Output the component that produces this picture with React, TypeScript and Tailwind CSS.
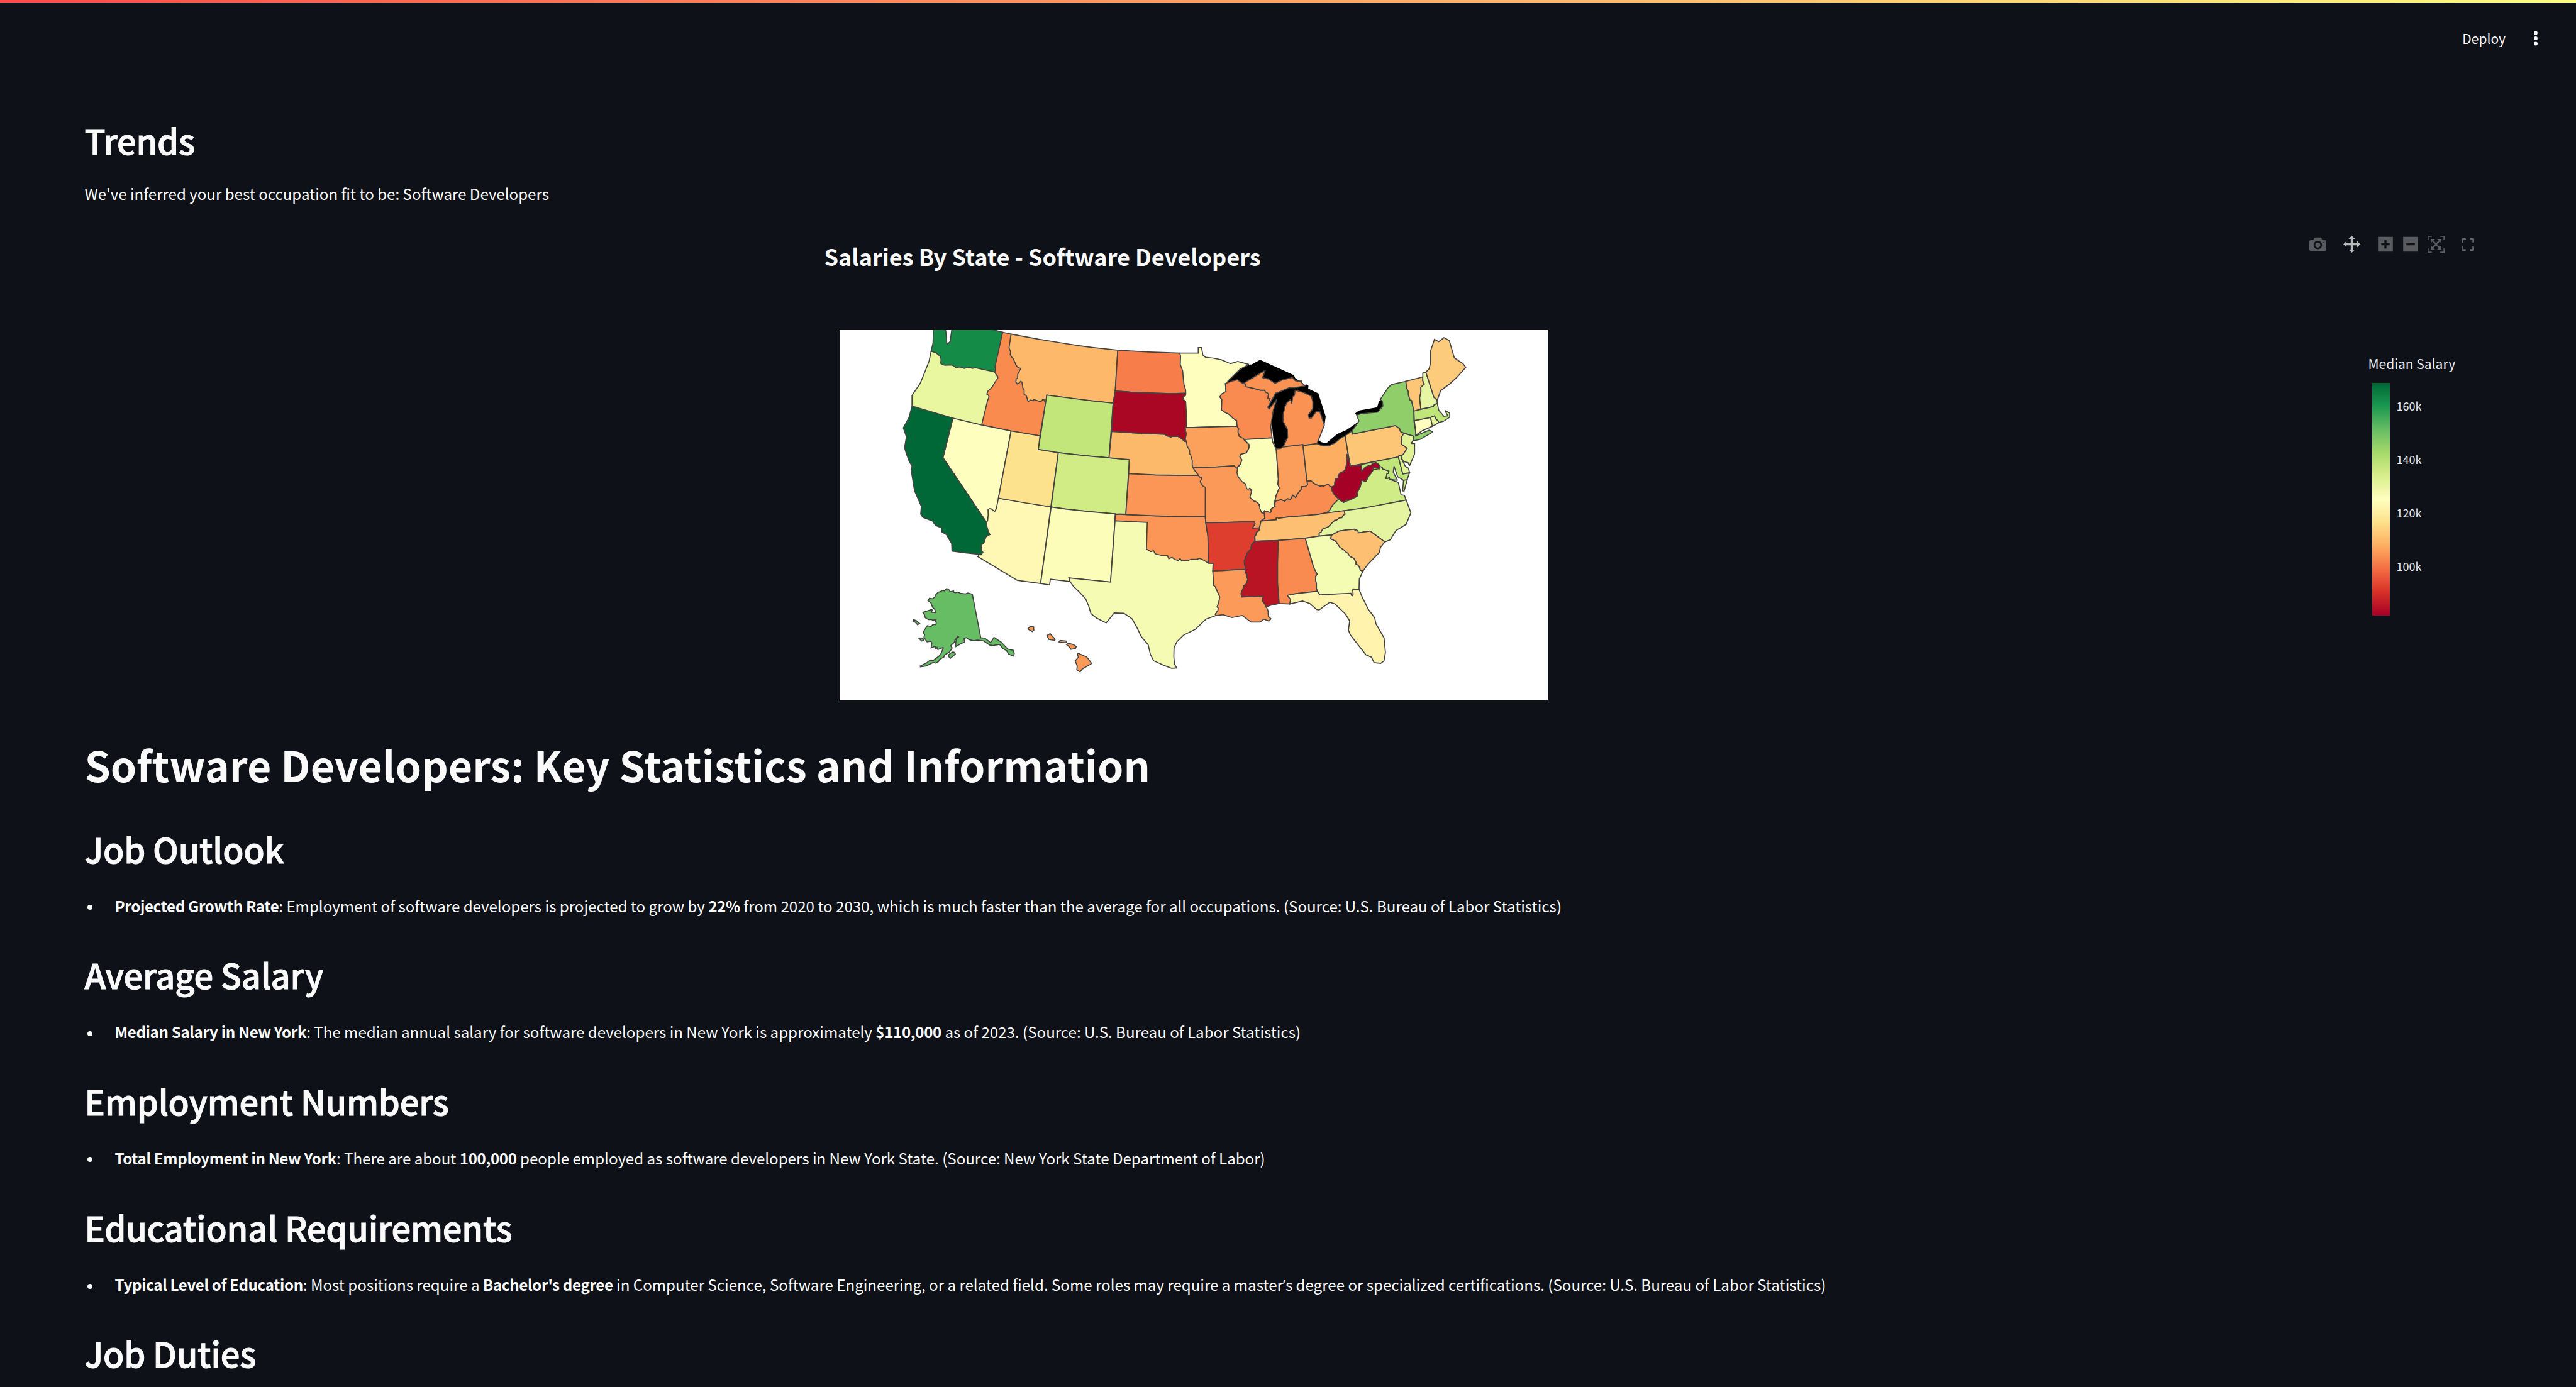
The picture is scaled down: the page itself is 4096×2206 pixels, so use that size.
import React from "react";

/* ---------- Map geometry ---------- */

// Outlines are stored per map sheet; each sheet has its own origin and scale.
type Sheet = { x: number; y: number; sx: number; sy: number };
const SHEETS: Record<string, Sheet> = {
  A: { x: 2190, y: 860, sx: 2.45, sy: 2.45 },
  B: { x: 2800, y: 860, sx: 3, sy: 3 },
  C: { x: 3150, y: 860, sx: 3, sy: 3 },
  D: { x: 3500, y: 860, sx: 2.7034, sy: 2.7034 },
  E: { x: 2360, y: 1400, sx: 2.8, sy: 3 },
  F: { x: 2780, y: 1300, sx: 2.8, sy: 3 },
  G: { x: 3260, y: 1300, sx: 2.8, sy: 3 },
};

function outline(src: string): string {
  let sheet = SHEETS.A;
  const pts: string[] = [];
  for (const tok of src.trim().split(/\s+/)) {
    if (SHEETS[tok]) {
      sheet = SHEETS[tok];
      continue;
    }
    const [x, y] = tok.split(",").map(Number);
    pts.push(
      `${(sheet.x + x / sheet.sx).toFixed(1)},${(sheet.y + y / sheet.sy).toFixed(1)}`
    );
  }
  return pts.join(" ");
}

const LAKES = [
  "C 215,432 290,345 385,292 405,290 473,253 740,375 750,398 768,410 770,416 790,418 798,411 802,428 820,450 845,448 854,458 852,480 932,518 990,700 981,765 800,700 800,600 750,600 720,700 690,865 654,942 635,954 600,957 580,900 560,700 520,640 540,500 300,500",
  "C 938,885 950,900 975,909 1000,906 1080,838 1155,806 1240,746 1220,790 1197,830 1143,880 1062,925 965,940 915,916",
  "C 1220,677 1250,653 1395,627 1410,575 1425,568 1460,618 1397,680 1270,690 1238,694",
];

const STATES: [string, string, string][] = [
  ["WA", "#148c48", "A 637,5 634,100 622,152 640,300 1000,330 1060,250 1082,30 1020,14 980,5 756,5 744,90 724,108 716,20 708,15 708,5"],
  ["OR", "#e9f7a1", "A 622,152 652,161 681,185 686,205 683,230 695,238 712,242 752,240 765,245 782,257 808,253 835,262 870,254 886,262 908,258 1032,286 1100,400 1000,640 950,660 500,520 499,505 499,436 551,360 580,290 609,215"],
  ["MT", "#fdb869", "A 1136,42 1310,74 1480,102 B 100,143 200,156 402,178 382,497 365,595 200,577 0,552 A 1366,434 1359,490 1200,500 1150,300 1120,130"],
  ["ID", "#f98b4f", "A 1082,30 1136,42 1123,130 1133,155 1131,174 1139,188 1150,200 1169,243 1181,257 1199,263 1179,300 1178,325 1169,330 1167,350 1176,362 1188,357 1199,345 1206,350 1212,388 1220,400 1221,430 1234,438 1246,476 1262,466 1280,471 1283,463 1320,474 1332,473 1342,459 1349,465 1354,478 1359,480 1322,696 1136,665 947,626 985,470 995,445 990,435 980,428 986,410 1015,382 1036,346 1051,325 1050,314 1036,295 1032,286 1036,268 1033,253"],
  ["AZ", "#fff7b4", "A 1055,1097 1225,1125 1392,1153 E 1040,396 870,371 578,184 A 931,1462 935,1400 970,1230 1000,1150"],
  ["NV", "#feffbe", "A 762,582 947,626 1136,665 1055,1097 1041,1165 1031,1183 1010,1167 996,1164 988,1172 989,1205 986,1240 979,1254 698,837"],
  ["CA", "#006837", "A 499,505 480,578 443,645 463,702 451,772 462,810 480,858 500,893 493,912 515,1048 559,1150 555,1200 569,1220 631,1244 650,1272 688,1288 689,1313 720,1331 754,1390 756,1438 836,1448 930,1458 943,1461 955,1445 945,1430 944,1400 962,1384 975,1345 1000,1331 990,1312 981,1280 979,1254 698,837 762,582"],
  ["UT", "#fde28e", "A 1136,665 1322,696 1312,783 1440,804 1392,1153 1225,1127 1055,1097"],
  ["WY", "#c2e67a", "A 1366,434 B 0,552 200,577 365,595 333,1025 200,1014 0,993 A 1440,804 1312,783"],
  ["CO", "#d2ec85", "A 1440,804 B 0,993 200,1014 333,1025 493,1040 465,1470 383,1467 200,1451 0,1430 A 1394,1154"],
  ["NM", "#fbfdb9", "A 1394,1154 B 0,1430 200,1451 383,1467 F 378,685 72,652 80,682 E 1256,380 1111,362 1106,407 1040,396"],
  ["OK", "#fb9656", "F 413,150 490,152 700,162 870,168 1074,167 1078,218 1094,325 1097,535 900,560 600,500 600,230 411,202"],
  ["TX", "#f5fbb3", "F 411,202 648,214 642,424 673,444 695,438 706,462 755,475 796,476 806,500 830,490 850,506 876,515 889,499 902,518 928,512 942,517 970,505 1015,504 1034,498 1065,513 1097,535 1132,536 1130,597 1136,711 1149,722 1181,801 1175,840 1162,880 1169,888 1168,908 1148,937 1152,948 1080,976 1002,1056 915,1102 866,1154 845,1200 843,1270 848,1330 864,1361 826,1363 770,1340 695,1304 671,1254 654,1176 604,1114 574,1046 537,974 476,930 405,927 346,1006 275,968 234,933 217,872 194,815 150,764 106,719 82,684 72,652 378,685"],
  ["KS", "#fb9656", "B 488,1149 700,1160 860,1163 1060,1164 1150,1250 1150,1488 F 1074,167 870,168 700,162 490,152"],
  ["MN", "#feffbf", "B 890,201 1036,201 1036,157 1062,157 1072,215 1094,234 1150,240 1220,254 1290,284 1347,267 1435,290 1365,328 1268,422 1268,434 1250,440 1254,503 1218,525 1207,546 1222,567 1219,648 1240,664 1280,684 1310,715 1338,732 1343,777 1000,787 935,788 850,600 850,300"],
  ["IA", "#fca15b", "B 935,788 1000,787 1343,777 1347,787 1356,800 1350,815 1358,856 1390,866 1398,885 1437,921 1436,948 1415,987 1370,998 1364,1018 1380,1042 1368,1076 1350,1090 1343,1112 1318,1089 1170,1098 990,1102 940,1000 900,850"],
  ["MO", "#fb9958", "B 990,1102 1170,1098 1318,1089 1343,1110 1400,1200 1480,1330 F 1480,100 1490,138 1508,142 1512,182 1485,203 1472,257 1420,260 1440,225 1436,211 1340,211 1200,215 1078,217 1074,167 B 1091,1257 1069,1245 1051,1213 1062,1192 1062,1180 1049,1178 1020,1150"],
  ["NE", "#fdb96a", "B 354,818 600,833 772,840 790,852 822,862 830,857 876,857 915,880 930,897 941,895 949,935 967,963 968,996 976,1002 989,1050 988,1082 996,1107 1012,1130 1030,1153 1038,1164 860,1163 700,1160 488,1149 493,1040 333,1025"],
  ["ND", "#f77e4a", "B 402,178 650,192 890,201 897,225 894,290 913,340 918,400 924,450 937,492 937,517 830,520 700,517 500,508 382,499"],
  ["SD", "#aa0725", "B 382,499 500,508 700,517 830,520 937,517 937,533 917,546 919,565 937,583 942,670 943,786 935,790 935,815 941,828 940,850 933,880 941,895 930,897 918,890 915,880 876,857 830,857 822,862 790,852 772,840 600,833 354,818 365,600"],
  ["AR", "#de3e2e", "F 1078,217 1200,215 1340,211 1436,211 1440,225 1420,260 1472,257 1469,278 1450,293 1448,310 1438,325 1441,363 1415,388 1410,425 1385,452 1362,515 1362,540 1370,570 1368,586 1295,587 1200,594 1130,597 1132,536 1097,535 1094,325"],
  ["LA", "#fb9a59", "F 1130,597 1200,594 1295,587 1368,586 1369,608 1382,630 1381,650 1388,662 1375,700 1360,712 1338,775 1341,801 1500,796 1494,832 1510,852 1524,882 1536,910 1538,955 1558,974 1542,991 1505,976 1478,999 1412,999 1345,947 1270,964 1205,941 1152,948 1148,937 1168,908 1169,888 1162,880 1175,840 1181,801 1149,722 1136,711"],
  ["WI", "#f98a50", "C 200,440 250,422 292,410 338,441 355,442 363,466 425,479 475,493 508,493 518,509 530,515 540,523 534,557 551,560 548,572 558,584 533,628 545,640 605,563 577,650 557,780 567,868 348,882 342,874 310,856 299,825 300,805 305,800 296,787 292,777 288,732 260,715 230,684 190,664 169,648 172,567 157,546 168,525 204,503"],
  ["MI", "#fa9254", "C 338,441 515,335 492,394 540,405 591,439 650,411 727,393 750,418 790,425 828,460 750,472 703,473 622,508 595,517 558,584 548,572 551,560 534,557 540,523 530,515 518,509 508,493 475,493 425,479 363,466 355,442"],
  ["MI2", "#fa9254", "C 750,493 820,512 877,541 889,585 888,640 854,687 859,712 877,712 915,661 945,664 979,768 955,830 921,914 815,928 654,940 690,865 688,800 655,740 655,685 668,625 682,595 712,565 722,600 730,545 743,533"],
  ["IL", "#fbfeb9", "C 348,882 567,868 572,900 595,948 600,955 617,1195 613,1232 625,1262 600,1322 590,1365 584,1397 594,1405 558,1430 562,1445 555,1457 508,1444 500,1460 485,1457 471,1425 467,1392 437,1368 424,1366 393,1337 408,1280 392,1264 380,1273 367,1268 360,1232 330,1213 300,1175 291,1142 297,1098 310,1088 318,1076 330,1042 314,1018 320,998 365,987 386,948 386,921"],
  ["KY", "#f98c51", "G 165,142 168,182 140,203 252,194 252,180 260,175 268,182 350,170 450,162 560,151 600,143 C 1000,1455 1020,1440 1035,1415 1047,1395 1095,1352 1060,1318 1040,1285 1037,1255 1025,1250 1009,1233 978,1246 945,1247 910,1235 873,1206 842,1208 847,1238 830,1250 800,1252 798,1272 768,1308 753,1338 730,1320 711,1355 690,1347 667,1367 640,1355 598,1365 590,1380 584,1397 594,1405 558,1430 562,1445 555,1457 508,1444"],
  ["IN", "#fc9e5b", "C 600,955 635,952 654,940 810,921 842,1208 847,1238 830,1250 800,1252 798,1272 768,1308 753,1338 730,1320 711,1355 690,1347 667,1367 640,1355 598,1365 590,1365 600,1322 625,1262 613,1232 617,1195"],
  ["OH", "#fdae61", "C 812,930 921,914 965,931 1012,931 1062,909 1105,873 1143,852 1167,998 1155,1000 1160,1030 1150,1100 1138,1128 1105,1145 1088,1165 1088,1190 1070,1188 1062,1215 1060,1245 1037,1255 1025,1250 1009,1233 978,1246 945,1247 910,1235 873,1206 842,1208"],
  ["VA", "#d0ec86", "D 515,1221 505,1190 481,1187 461,1098 400,1077 398,1064 385,1070 374,1070 380,1040 390,1035 395,1018 350,1003 348,992 330,985 324,1002 285,990 250,1052 232,1093 203,1084 170,1170 165,1200 73,1240 40,1215 C 1047,1395 1035,1415 1020,1440 1000,1455 G 600,143 753,122 905,100 1208,38"],
  ["VA2", "#d0ec86", "D 498,1084 526,1075 502,1160 492,1159"],
  ["TN", "#fdc072", "G 140,203 252,194 252,180 260,175 268,182 350,170 450,162 560,151 600,143 753,122 758,150 745,158 735,177 715,180 692,200 684,195 672,210 660,222 635,250 594,266 582,291 568,299 568,322 466,338 265,357 97,363 95,325 105,310 107,293 126,278 130,257"],
  ["NC", "#e5f4a0", "G 753,122 905,100 1208,38 1242,138 1207,230 1132,278 1090,352 1050,368 943,283 855,297 853,283 838,270 830,268 780,272 715,282 662,313 568,322 568,299 582,291 594,266 635,250 660,222 672,210 684,195 692,200 715,180 735,177 745,158 758,150"],
  ["MS", "#b81424", "G 97,363 265,357 267,372 262,540 262,690 274,853 210,867 178,881 166,852 150,832 156,796 -3,801 -6,775 16,712 31,700 44,662 37,650 38,630 25,608 24,586 26,570 18,540 18,515 41,452 66,425 71,388"],
  ["AL", "#f98b50", "G 265,357 466,339 528,570 553,622 542,640 542,672 548,695 548,735 556,757 400,775 337,788 337,796 358,820 352,857 274,853 262,690 262,540 267,372"],
  ["FL", "#fff3ae", "G 337,788 400,775 556,757 574,785 700,777 801,773 809,793 817,780 814,745 819,738 861,742 883,800 930,900 976,965 985,1012 1045,1124 1055,1238 1044,1306 1020,1325 972,1319 952,1276 912,1258 798,1102 783,1062 792,990 760,934 683,856 646,843 567,904 550,901 500,854 446,833 352,857 358,820 337,796"],
  ["GA", "#f4fbb3", "G 466,339 568,322 662,313 650,342 690,362 720,410 752,432 762,445 780,458 795,483 823,497 840,530 838,541 855,552 866,570 870,590 890,597 863,660 861,742 819,738 814,745 817,780 809,793 801,773 700,777 574,785 556,757 548,735 548,695 542,672 542,640 553,622 528,570"],
  ["SC", "#fdc072", "G 662,313 715,282 780,272 830,268 831,280 838,270 853,283 855,297 943,283 1050,368 1018,412 1010,452 928,542 890,597 870,590 866,570 855,552 838,541 840,530 823,497 795,483 780,458 762,445 752,432 720,410 690,362 650,342"],
  ["PA", "#fdc676", "D 84,768 128,735 137,755 440,695 470,716 477,738 500,750 481,785 487,800 485,828 525,856 497,898 482,912 468,905 462,918 300,950 120,983"],
  ["NY", "#8fce69", "D 166,622 190,612 315,600 352,556 348,522 333,510 388,428 412,404 515,381 521,430 533,455 533,478 545,515 555,516 572,592 572,660 586,748 584,768 680,728 708,740 615,794 568,803 568,770 500,748 477,738 470,716 440,695 137,755 133,733 182,663"],
  ["NJ", "#e0f295", "D 500,750 568,770 566,800 553,822 577,822 577,897 541,980 530,958 500,952 480,920 482,912 497,898 525,856 485,828 487,800 481,785"],
  ["MD", "#c0e578", "D 198,972 300,950 462,918 493,1038 541,1030 524,1078 498,1084 457,1058 431,984 425,1026 456,1084 400,1076 398,1064 385,1070 374,1070 380,1040 390,1035 395,1018 350,1003 348,992 330,985 324,1002 202,1020"],
  ["DE", "#dff294", "D 462,918 468,905 482,908 480,918 487,937 512,985 534,998 541,1030 493,1038"],
  ["WV", "#a50026", "C 1158,998 1165,998 1185,1090 1270,1082 1273,1132 1300,1100 1325,1088 1350,1082 1360,1070 1385,1063 1405,1075 1416,1090 1412,1112 1365,1100 1362,1125 1345,1150 1330,1168 1318,1190 1305,1212 1275,1202 1268,1230 1262,1255 1240,1298 1238,1328 1220,1338 1200,1345 1190,1355 1165,1362 1150,1358 1132,1376 1105,1362 1095,1350 1060,1318 1040,1285 1037,1255 1060,1245 1062,1215 1070,1188 1088,1190 1088,1165 1105,1145 1138,1128 1150,1100 1160,1030"],
  ["CT", "#feffbe", "D 575,660 690,638 704,700 633,731 586,764 586,745"],
  ["MA", "#c0e579", "D 572,592 710,560 716,545 738,538 748,586 785,629 813,626 791,588 826,606 826,636 782,665 747,674 745,663 728,650 718,626 690,638 575,660"],
  ["RI", "#e5f5a0", "D 690,638 718,626 728,650 745,663 747,676 704,700"],
  ["VT", "#fdc677", "D 515,381 635,350 635,378 646,400 621,424 622,455 613,500 621,578 572,592 555,516 545,515 533,478 533,455 521,430"],
  ["NH", "#e6f6a2", "D 635,350 635,323 657,316 714,494 735,514 738,538 716,545 710,560 621,578 613,500 622,455 621,424 646,400 635,378"],
  ["ME", "#fdcb7c", "D 657,316 680,292 691,247 691,163 718,83 748,100 785,71 823,91 859,215 919,254 940,282 880,350 828,398 762,447 738,514 714,494"],
  ["AK", "#66bd63", "E 349,435 368,447 374,460 400,455 402,465 415,468 430,463 450,472 485,478 505,470 538,480 600,823 630,826 672,862 697,820 748,856 798,912 838,922 846,945 842,968 805,952 790,925 760,905 738,875 690,884 665,880 622,848 575,840 550,846 515,838 493,822 476,830 482,856 450,872 417,892 415,870 420,830 437,818 432,810 410,840 405,860 378,886 390,903 370,935 334,958 328,975 298,992 290,1010 268,1022 250,1018 195,1046 156,1052 155,1045 200,1022 222,1004 250,1002 290,970 308,948 325,900 300,908 285,917 278,900 268,912 265,890 235,903 240,865 232,850 205,855 182,820 187,800 177,783 185,762 208,728 235,735 248,718 268,720 273,705 265,685 275,675 245,687 240,680 215,680 192,665 185,640 174,623 240,600 243,605 237,622 270,625 262,600 245,582 235,550 212,530 222,513 245,516 262,502 268,485 285,466 322,450 332,455"],
  ["AK2", "#66bd63", "E 102,692 106,680 125,688 150,710 135,720 118,700"],
  ["AK3", "#66bd63", "E 143,826 165,824 178,832 178,845 166,849"],
  ["AK4", "#66bd63", "E 363,957 390,936 403,937 413,950 376,985 364,970"],
  ["HI", "#fb9a59", "E 945,753 962,735 988,737 990,762 978,774"],
  ["HI2", "#fb9a59", "E 1086,805 1110,791 1147,835 1142,842 1101,836"],
  ["HI3", "#fb9a59", "E 1174,858 1183,844 1232,849 1228,862"],
  ["HI4", "#fb9a59", "E 1231,877 1243,866 1280,876 1302,892 1296,907 1263,914 1248,892"],
  ["HI5", "#fb9a59", "E 1309,955 1315,944 1380,975 1415,1026 1345,1070 1330,1092 1306,1075 1309,1045 1294,1005 1318,975"],
];

function SalaryMap() {
  return (
    <svg
      className="block h-[589px] w-[1126px] shrink-0 bg-white"
      viewBox="2203.5 866.5 1859.5 972.3"
      preserveAspectRatio="none"
    >
      {LAKES.map((d) => (
        <polygon key={d} points={outline(d)} fill="#000" />
      ))}
      {STATES.map(([id, fill, d]) => (
        <polygon
          key={id}
          points={outline(d)}
          fill={fill}
          stroke="#444"
          strokeWidth={2.8}
          strokeLinejoin="miter"
          strokeMiterlimit={2}
        />
      ))}
    </svg>
  );
}

/* ---------- Mode bar ---------- */

const FLIP = "matrix(1 0 0 -1 0 850)";

function CameraIcon() {
  return (
    <svg className="h-[27px] w-[27px]" viewBox="0 0 1000 1000" fill="#5a5b5f">
      <path
        transform={FLIP}
        d="m500 450c-83 0-150-67-150-150 0-83 67-150 150-150 83 0 150 67 150 150 0 83-67 150-150 150z m400 150h-120c-16 0-34 13-39 29l-31 93c-6 15-23 28-40 28h-340c-16 0-34-13-39-28l-31-94c-6-15-23-28-40-28h-120c-55 0-100-45-100-100v-450c0-55 45-100 100-100h800c55 0 100 45 100 100v450c0 55-45 100-100 100z m-400-550c-138 0-250 112-250 250 0 138 112 250 250 250 138 0 250-112 250-250 0-138-112-250-250-250z m365 380c-19 0-35 16-35 35 0 19 16 35 35 35 19 0 35-16 35-35 0-19-16-35-35-35z"
      />
    </svg>
  );
}

function PanIcon() {
  return (
    <svg className="ml-[27px] h-[27px] w-[27px]" viewBox="0 0 1000 1000" fill="#b8b9bb">
      <path
        transform={FLIP}
        d="m1000 350l-187 188 0-125-250 0 0 250 125 0-188 187-187-187 125 0 0-250-250 0 0 125-188-188 186-187 0 125 252 0 0-250-125 0 187-188 188 188-125 0 0 250 250 0 0-126 187 188z"
      />
    </svg>
  );
}

function ZoomInIcon() {
  return (
    <svg className="ml-[28px] h-[27px] w-[24px]" viewBox="0 0 875 1000" fill="#5a5b5f">
      <path
        transform={FLIP}
        d="m1 787l0-875 875 0 0 875-875 0z m687-500l-187 0 0-187-125 0 0 187-188 0 0 125 188 0 0 187 125 0 0-187 187 0 0-125z"
      />
    </svg>
  );
}

function ZoomOutIcon() {
  return (
    <svg className="ml-4 h-[27px] w-[24px]" viewBox="0 0 875 1000" fill="#5a5b5f">
      <path
        transform={FLIP}
        d="m0 788l0-876 875 0 0 876-875 0z m688-500l-500 0 0 125 500 0 0-125z"
      />
    </svg>
  );
}

function AutoscaleIcon() {
  return (
    <svg className="ml-[15px] h-[27px] w-[27px]" viewBox="0 0 1000 1000" fill="#5a5b5f">
      <path
        transform={FLIP}
        d="m250 850l-187 0-63 0 0-62 0-188 63 0 0 188 187 0 0 62z m688 0l-188 0 0-62 188 0 0-188 62 0 0 188 0 62-62 0z m-875-938l0 188-63 0 0-188 0-62 63 0 187 0 0 62-187 0z m875 188l0-188-188 0 0-62 188 0 62 0 0 62 0 188-62 0z m-125 188l-1 0-93-94-156 156 156 156 92-93 2 0 0 250-250 0 0-2 93-92-156-156-156 156 94 92 0 2-250 0 0-250 0 0 93 93 157-156-157-156-93 94 0 0 0-250 250 0 0 0-94 93 156 157 156-157-93-93 0 0 250 0 0 250z"
      />
    </svg>
  );
}

function FullscreenIcon() {
  return (
    <svg
      className="mt-1 ml-[27px] h-[20px] w-[20px]"
      viewBox="0 0 14 14"
      fill="#626368"
    >
      <path d="M1 9c-.55 0-1 .45-1 1v3c0 .55.45 1 1 1h3c.55 0 1-.45 1-1s-.45-1-1-1H2v-2c0-.55-.45-1-1-1zM1 5c.55 0 1-.45 1-1V2h2c.55 0 1-.45 1-1s-.45-1-1-1H1C.45 0 0 .45 0 1v3c0 .55.45 1 1 1zm11 7h-2c-.55 0-1 .45-1 1s.45 1 1 1h3c.55 0 1-.45 1-1v-3c0-.55-.45-1-1-1s-1 .45-1 1v2zM9 1c0 .55.45 1 1 1h2v2c0 .55.45 1 1 1s1-.45 1-1V1c0-.55-.45-1-1-1h-3c-.55 0-1 .45-1 1z" />
    </svg>
  );
}

/* ---------- Legend ---------- */

const TICKS = ["160k", "140k", "120k", "100k"];

function Legend() {
  return (
    <div className="mt-[38px] text-[#e6eaf1]">
      <div className="h-[30px] text-[21px] leading-[30px] whitespace-nowrap">Median Salary</div>
      <div className="mt-4 ml-[6px] flex">
        <div className="h-[370px] w-[28px] bg-[linear-gradient(to_top,#a50026,#d73027,#f46d43,#fdae61,#fee08b,#ffffbf,#d9ef8b,#a6d96a,#66bd63,#1a9850,#006837)]" />
        <div className="mt-[23px] ml-[11px] flex flex-col text-[18px] leading-[26px]">
          {TICKS.map((t) => (
            <span key={t} className="h-[85px]">
              {t}
            </span>
          ))}
        </div>
      </div>
    </div>
  );
}

/* ---------- Report ---------- */

function Heading({ children }: { children: React.ReactNode }) {
  return (
    <h2 className="h-[73px] text-[54.2px] leading-[73px] font-medium tracking-[-0.2px] [-webkit-text-stroke:1px_#fafafa]">
      {children}
    </h2>
  );
}

function Section({ title, children }: { title: string; children?: React.ReactNode }) {
  return (
    <section className="h-[200.7px]">
      <Heading>{title}</Heading>
      {children && (
        <ul className="mt-[33px]">
          <li className="flex items-center text-[24.1px] leading-[43px] whitespace-nowrap">
            <span className="mt-[6px] ml-[4px] size-2 rounded-full bg-[#fafafa]" />
            <span className="ml-[36px]">{children}</span>
          </li>
        </ul>
      )}
    </section>
  );
}

function B({ children }: { children: React.ReactNode }) {
  return <strong className="font-semibold tracking-[-0.33px]">{children}</strong>;
}

export default function App() {
  return (
    <div className="h-[2206px] w-[4096px] overflow-hidden bg-[#0e1117] font-['Noto_Sans_CJK_SC','Noto_Sans',sans-serif] text-[#fafafa]">
      <div className="h-[3.5px] bg-[linear-gradient(90deg,#ff4b4b,#fffd80)]" />
      <header className="flex h-[114px] items-center justify-end pr-[61px]">
        <span className="text-[21px] leading-[30px]">Deploy</span>
        <svg className="ml-[45px] h-[24px] w-[6px]" viewBox="0 0 6 24" fill="#fafafa">
          <circle cx="3" cy="3.5" r="2.9" />
          <circle cx="3" cy="12" r="2.9" />
          <circle cx="3" cy="20.5" r="2.9" />
        </svg>
      </header>

      <main className="px-[134.5px] pt-[68.5px]">
        <Heading>Trends</Heading>
        <p className="mt-[27px] h-[43px] text-[24.1px] leading-[43px]">
          We've inferred your best occupation fit to be: Software Developers
        </p>

        <div className="mt-[46px] flex h-[150px] items-start">
          <h3 className="mt-[12px] ml-[1176px] w-[2361px] text-[36.1px] leading-[40px] font-bold">
            Salaries By State - Software Developers
          </h3>
          <div className="flex items-start">
            <CameraIcon />
            <PanIcon />
            <ZoomInIcon />
            <ZoomOutIcon />
            <AutoscaleIcon />
            <FullscreenIcon />
          </div>
        </div>
        <div className="flex h-[645.5px] items-start">
          <div className="ml-[1200px] w-[2431px]">
            <SalaryMap />
          </div>
          <Legend />
        </div>

        <h1 className="h-[89px] text-[66.2px] leading-[89px] font-bold">
          Software Developers: Key Statistics and Information
        </h1>
        <div className="mt-[53px]">
          <Section title="Job Outlook">
            <B>Projected Growth Rate</B>: Employment of software developers is projected to grow by{" "}
            <B>22%</B> from 2020 to 2030, which is much faster than the average for all occupations.
            (Source: U.S. Bureau of Labor Statistics)
          </Section>
          <Section title="Average Salary">
            <B>Median Salary in New York</B>: The median annual salary for software developers in New
            York is approximately <B>$110,000</B> as of 2023. (Source: U.S. Bureau of Labor
            Statistics)
          </Section>
          <Section title="Employment Numbers">
            <B>Total Employment in New York</B>: There are about <B>100,000</B> people employed as
            software developers in New York State. (Source: New York State Department of Labor)
          </Section>
          <Section title="Educational Requirements">
            <B>Typical Level of Education</B>: Most positions require a <B>Bachelor's degree</B> in
            Computer Science, Software Engineering, or a related field. Some roles may require a
            master<span className="font-['Open_Sans']">’</span>s degree or specialized
            certifications. (Source: U.S. Bureau of Labor Statistics)
          </Section>
          <Section title="Job Duties" />
        </div>
      </main>
    </div>
  );
}
